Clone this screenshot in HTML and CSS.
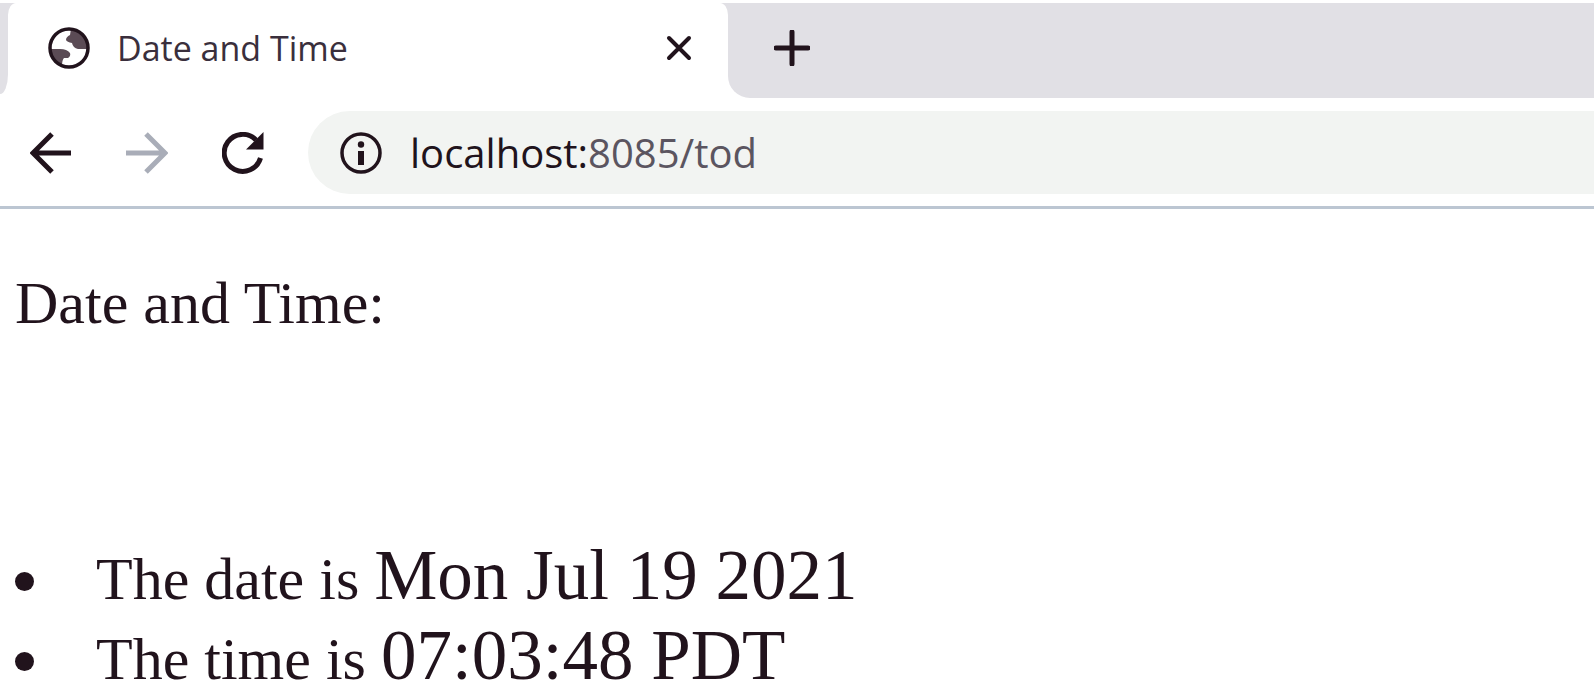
FILE: index.html
```html
<!DOCTYPE html>
<html lang="en">
<head>
<meta charset="utf-8">
<title>Date and Time</title>
<link rel="stylesheet" href="styles.css">
</head>
<body>
<header class="browser">
  <div class="tab-strip">
    <div class="strip-left"></div>
    <div class="tab-wrap">
      <div class="tab">
        <svg class="icon" viewBox="0 0 42 42" aria-hidden="true">
          <path fill="#5b4b55" d="M23 2 L22 8 Q18 10 18 13 Q19 15 24 16 Q25 21 30 22 L39 22 Q41 6 23 2Z"/>
          <path fill="#5b4b55" d="M2 22 L12 22 Q19 22 22 26 Q23 29 20 31 L16 31 Q14 33 14 39 Q2 34 2 22Z"/>
          <circle cx="21" cy="21" r="19" fill="none" stroke="#21131c" stroke-width="3.5"/>
        </svg>
        <span class="tab-title">Date and Time</span>
        <button class="btn close" aria-label="Close tab">
          <svg class="close-icon" viewBox="0 0 26 26"><path d="M3 3 L23 23 M23 3 L3 23"/></svg>
        </button>
      </div>
    </div>
    <div class="strip-right">
      <button class="btn" aria-label="New tab">
        <svg class="plus-icon" viewBox="0 0 36 36"><path d="M18 2 V34 M2 18 H34"/></svg>
      </button>
    </div>
  </div>
  <nav class="toolbar">
    <button class="btn" aria-label="Back">
      <svg class="icon stroke" viewBox="0 0 42 42"><path d="M41 21 H4 M22 2 L3 21 L22 40"/></svg>
    </button>
    <button class="btn" aria-label="Forward">
      <svg class="icon stroke faded" viewBox="0 0 42 42"><path d="M0 21 H38 M20 2 L39 21 L20 40"/></svg>
    </button>
    <button class="btn" aria-label="Reload">
      <svg class="icon stroke" viewBox="0 0 42 42"><path d="M38.5 26 A18.5 18.5 0 1 1 34 8"/><path class="solid" d="M41.500 0 V17.500 H24 Z"/></svg>
    </button>
    <label class="address">
      <svg class="icon" viewBox="0 0 42 42" aria-hidden="true">
        <circle cx="21" cy="21" r="19" fill="none" stroke="#21131c" stroke-width="3.5"/>
        <circle cx="21" cy="12.500" r="3.200" fill="#21131c"/>
        <path fill="#21131c" d="M18 19h6v14h-6z"/>
      </svg>
      <span class="url" role="textbox" aria-label="Address"><span class="host">localhost:</span>8085/tod</span>
    </label>
  </nav>
</header>
<main class="page">
  <p class="intro">Date and Time:</p>
  <ul class="facts">
    <li><span>The date is <span class="value">Mon Jul 19 2021</span></span></li>
    <li><span>The time is <span class="value">07:03:48 PDT</span></span></li>
  </ul>
</main>
</body>
</html>
```
FILE: styles.css
```css
* { box-sizing: border-box; }
html { overflow: hidden; }
body {
  margin: 0;
  background: #fff;
  color: #21131c;
  font-family: "Liberation Serif", "Times New Roman", serif;
}
.browser { font-family: "Open Sans", "Segoe UI", sans-serif; border-bottom: 3px solid #bcc6d2; }
.btn { border: 0; padding: 0; background: none; display: flex; color: inherit; }
.icon { width: 42px; height: 42px; flex: none; display: block; }
.tab-strip { display: flex; height: 98px; padding-top: 3px; }
.strip-left { width: 8px; margin-bottom: 4px; background: #e1e0e5; border-bottom-right-radius: 8px 20px; }
.tab-wrap { width: 720px; background: linear-gradient(#e1e0e5 12px, #fff 12px); }
.tab {
  display: flex;
  align-items: center;
  height: 100%;
  padding: 0 36px 6px 40px;
  background: #fff;
  border-radius: 8px 8px 0 0 / 12px 12px 0 0;
}
.tab-title { flex: 1; margin-left: 27px; font-size: 34px; line-height: 48px; color: #3a2f3c; }
.close-icon { width: 26px; height: 26px; fill: none; stroke: #21131c; stroke-width: 4; stroke-linecap: round; }
.strip-right {
  flex: 1;
  display: flex;
  align-items: center;
  padding: 0 0 6px 46px;
  background: #e1e0e5;
  border-bottom-left-radius: 22px;
}
.plus-icon { width: 36px; height: 36px; fill: none; stroke: #21131c; stroke-width: 5; stroke-linecap: round; }
.toolbar { display: flex; align-items: center; gap: 54px; padding: 13px 0 12px 30px; }
.stroke { fill: none; stroke: #21131c; stroke-width: 5; }
.faded { stroke: #a9adb8; }
.solid { fill: #21131c; stroke: none; }
.address {
  flex: 1;
  display: flex;
  align-items: center;
  gap: 28px;
  height: 83px;
  margin-left: -10px;
  padding-left: 32px;
  background: #f2f4f2;
  border-radius: 42px 0 0 42px;
}
.url { font-size: 40px; line-height: 56px; color: #5b5560; }
.host { color: #21131c; }
.page { padding: 54px 15px 0; font-size: 60px; line-height: 80px; }
.intro { margin: 0 0 196px; }
.facts { margin: 0; padding: 0; list-style: none; }
.facts li { display: flex; align-items: flex-start; }
.facts li::before {
  content: "";
  width: 19px;
  height: 19px;
  margin: 33px 62px 0 0;
  border-radius: 50%;
  background: #21131c;
}
.value { font-size: 71px; line-height: 72px; }
```
